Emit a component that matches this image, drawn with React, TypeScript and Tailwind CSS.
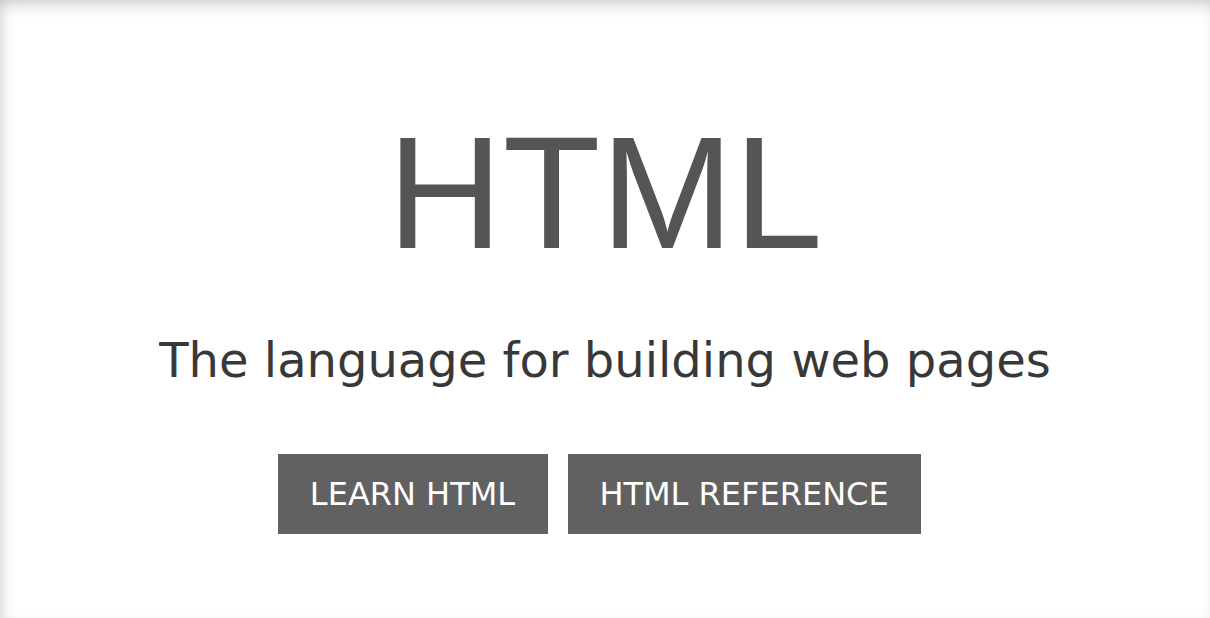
export default function App() {
  return (
    <div className="h-[618px] w-full bg-white shadow-[inset_4px_7px_18px_-6px_rgba(0,0,0,0.28)] flex flex-col items-center font-['DejaVu_Sans',Verdana,sans-serif]">
      {/* Hero heading */}
      <h1 className="mt-[113px] text-[160px] leading-none text-[#555555] font-['Liberation_Sans',Arial,sans-serif]">
        HTML
      </h1>

      <p className="mt-[63px] text-[48px] leading-none text-[#383838]">
        The language for building web pages
      </p>

      {/* Call to action buttons */}
      <div className="mt-[70px] pr-3 flex gap-5">
        <a
          href="#"
          className="w-[270px] h-20 flex items-center justify-center bg-[#616161] text-white text-[32px]"
        >
          LEARN HTML
        </a>
        <a
          href="#"
          className="w-[353px] h-20 flex items-center justify-center bg-[#616161] text-white text-[32px]"
        >
          HTML REFERENCE
        </a>
      </div>
    </div>
  );
}
